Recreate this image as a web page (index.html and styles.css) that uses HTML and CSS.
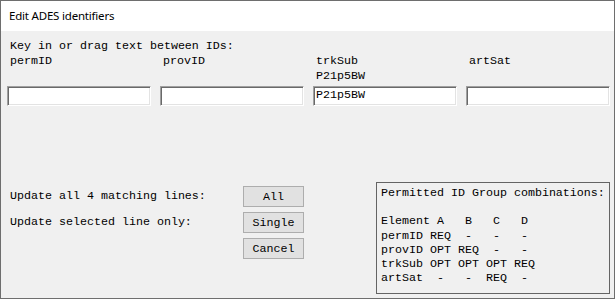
FILE: index.html
```html
<!DOCTYPE html>
<html lang="en">
<head>
    <meta charset="UTF-8">
    <title>Edit ADES identifiers</title>
    <link rel="stylesheet" href="styles.css">
</head>
<body>
    <div class="window">
        <div class="titlebar">Edit ADES identifiers</div>

        <div class="content">
            <p class="hint">Key in or drag text between IDs:</p>

            <div class="ids">
                <div class="id">
                    <div class="id-label">permID</div>
                    <input class="id-field" type="text" value="">
                </div>
                <div class="id">
                    <div class="id-label">provID</div>
                    <input class="id-field" type="text" value="">
                </div>
                <div class="id">
                    <div class="id-label">trkSub<br>P21p5BW</div>
                    <input class="id-field" type="text" value="P21p5BW">
                </div>
                <div class="id">
                    <div class="id-label">artSat</div>
                    <input class="id-field" type="text" value="">
                </div>
            </div>

            <div class="actions">
                <div class="updates">
                    <span class="update-label">Update all 4 matching lines:</span>
                    <button class="btn">All</button>
                    <span class="update-label">Update selected line only:</span>
                    <button class="btn">Single</button>
                    <span class="update-label"></span>
                    <button class="btn">Cancel</button>
                </div>

<pre class="combos">Permitted ID Group combinations:

Element A   B   C   D
permID REQ  -   -   -
provID OPT REQ  -   -
trkSub OPT OPT OPT REQ
artSat  -   -  REQ  -</pre>
            </div>
        </div>
    </div>
</body>
</html>
```

FILE: styles.css
```css
body {
    margin: 0;
    background-color: #fff;
}

.window {
    width: 615px;
    height: 299px;
    box-sizing: border-box;
    border: 1px solid #6e6e6e;
    display: flex;
    flex-direction: column;
    font-family: 'Courier New', 'Liberation Mono', monospace;
    font-size: 11.67px;
    color: #000;
}

.titlebar {
    height: 30px;
    line-height: 29px;
    padding-left: 8px;
    background-color: #fff;
    font-family: 'Noto Sans', 'Open Sans', sans-serif;
    font-size: 11.5px;
    letter-spacing: -0.2px;
}

.content {
    flex: 1;
    display: flex;
    flex-direction: column;
    padding: 7px 0 4px 6px;
    background-color: #f0f0f0;
}

.hint {
    margin: 0;
    padding-left: 3px;
    line-height: 16px;
}

.ids {
    display: grid;
    grid-template-columns: repeat(4, 144px);
    column-gap: 9px;
}

.id-label {
    height: 30px;
    line-height: 15px;
    padding-left: 3px;
    margin-bottom: 2px;
}

.id-field {
    display: block;
    width: 144px;
    height: 20px;
    box-sizing: border-box;
    margin: 0;
    padding: 0 2px 3px 2px;
    font: inherit;
    color: #000;
    background-color: #fff;
    border: 1px solid;
    border-color: #a0a0a0 #fff #fff #a0a0a0;
    box-shadow: inset 1px 1px #696969, inset -1px -1px #e3e3e3;
    outline: none;
}

.actions {
    margin-top: auto;
    display: flex;
    align-items: flex-start;
}

.updates {
    display: grid;
    grid-template-columns: 233px 61px;
    grid-auto-rows: 21px;
    row-gap: 5px;
    padding: 4px 0 0 3px;
}

.update-label {
    line-height: 21px;
    white-space: pre;
}

.btn {
    height: 21px;
    margin: 0;
    padding: 0;
    font: inherit;
    color: #000;
    background-color: #e1e1e1;
    border: 1px solid #adadad;
}

.combos {
    width: 234px;
    height: 112px;
    box-sizing: border-box;
    margin: 0 0 0 72px;
    padding: 3px 4px;
    border: 1px solid #646464;
    font: inherit;
    line-height: 14.2px;
}
```
